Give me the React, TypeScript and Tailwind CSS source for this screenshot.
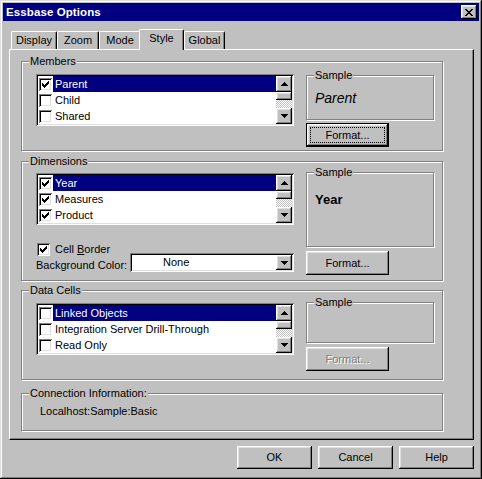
import type { ReactNode } from 'react';

const RAISED =
  'shadow-[inset_-1px_-1px_0_#000,inset_1px_1px_0_#fff,inset_-2px_-2px_0_#808080,inset_2px_2px_0_#dfdfdf]';
const SUNKEN =
  'shadow-[inset_1px_1px_0_#808080,inset_-1px_-1px_0_#fff,inset_2px_2px_0_#000,inset_-2px_-2px_0_#dfdfdf]';

interface ListItem {
  label: string;
  checked: boolean;
}

const MEMBERS: ListItem[] = [
  { label: 'Parent', checked: true },
  { label: 'Child', checked: false },
  { label: 'Shared', checked: false },
];

const DIMENSIONS: ListItem[] = [
  { label: 'Year', checked: true },
  { label: 'Measures', checked: true },
  { label: 'Product', checked: true },
];

const DATA_CELLS: ListItem[] = [
  { label: 'Linked Objects', checked: false },
  { label: 'Integration Server Drill-Through', checked: false },
  { label: 'Read Only', checked: false },
];

const TABS = [
  { label: 'Display', width: 'w-[46px]' },
  { label: 'Zoom', width: 'w-[42px]' },
  { label: 'Mode', width: 'w-[42px]' },
  { label: 'Style', width: 'w-[45px]', selected: true },
  { label: 'Global', width: 'w-[41px]' },
];

function CheckMark() {
  return (
    <svg width="7" height="7" viewBox="0 0 7 7" shapeRendering="crispEdges">
      <path
        d="M0 2h1v3h-1zM1 3h1v3h-1zM2 4h1v3h-1zM3 3h1v3h-1zM4 2h1v3h-1zM5 1h1v3h-1zM6 0h1v3h-1z"
        fill="#000"
      />
    </svg>
  );
}

function CheckBox({ checked }: { checked: boolean }) {
  return (
    <span className={`flex h-[13px] w-[13px] shrink-0 items-center justify-center bg-white ${SUNKEN}`}>
      {checked && <CheckMark />}
    </span>
  );
}

function Arrow({ dir }: { dir: 'up' | 'down' }) {
  return (
    <svg width="7" height="4" viewBox="0 0 7 4" shapeRendering="crispEdges">
      <path
        d={
          dir === 'up'
            ? 'M3 0h1v1h1v1h1v1h1v1h-7v-1h1v-1h1v-1h1z'
            : 'M0 0h7v1h-1v1h-1v1h-1v1h-1v-1h-1v-1h-1v-1h-1z'
        }
        fill="#000"
      />
    </svg>
  );
}

function ArrowButton({ dir, className = 'h-[16px]' }: { dir: 'up' | 'down'; className?: string }) {
  return (
    <div className={`flex w-[16px] shrink-0 items-center justify-center bg-[#c0c0c0] ${className} ${RAISED}`}>
      <Arrow dir={dir} />
    </div>
  );
}

function ScrollBar() {
  return (
    <div className="flex w-[16px] flex-col">
      <ArrowButton dir="up" />
      <div className={`h-[8px] bg-[#c0c0c0] ${RAISED}`} />
      <div className="h-[8px] bg-[image:repeating-conic-gradient(#c0c0c0_0_25%,#fff_0_50%)] bg-[length:2px_2px]" />
      <ArrowButton dir="down" />
    </div>
  );
}

function ListBox({ items }: { items: ListItem[] }) {
  return (
    <div className={`flex h-[52px] w-[258px] shrink-0 bg-white p-[2px] ${SUNKEN}`}>
      <div className="flex flex-1 flex-col">
        {items.map((item, i) => (
          <div key={item.label} className="flex h-[16px] items-center">
            <span className="flex w-[15px] justify-center">
              <CheckBox checked={item.checked} />
            </span>
            <span
              className={`flex h-full flex-1 items-center whitespace-nowrap pl-[2px] ${
                i === 0 ? 'bg-[#000080] text-white' : ''
              }`}
            >
              {item.label}
            </span>
          </div>
        ))}
      </div>
      <ScrollBar />
    </div>
  );
}

function Group({ label, className, children }: { label: string; className: string; children?: ReactNode }) {
  return (
    <div className={`relative border border-[#808080] shadow-[inset_1px_1px_0_#fff,1px_1px_0_#fff] ${className}`}>
      <span className="absolute -top-[8px] left-[7px] bg-[#c0c0c0] px-[1px] leading-[14px]">{label}</span>
      {children}
    </div>
  );
}

function Button({
  children,
  className = '',
  isDefault = false,
  disabled = false,
}: {
  children: ReactNode;
  className?: string;
  isDefault?: boolean;
  disabled?: boolean;
}) {
  if (isDefault) {
    return (
      <div className={`flex border border-black bg-[#c0c0c0] ${className}`}>
        <div className={`flex flex-1 p-[3px] ${RAISED}`}>
          <div className="flex flex-1 items-center justify-center border border-dotted border-black">{children}</div>
        </div>
      </div>
    );
  }
  return (
    <div
      className={`flex items-center justify-center bg-[#c0c0c0] ${RAISED} ${className} ${
        disabled ? 'text-[#808080] [text-shadow:1px_1px_0_#fff]' : ''
      }`}
    >
      {children}
    </div>
  );
}

function TitleBar() {
  return (
    <div className="flex h-[18px] items-center justify-between bg-[#000080] pl-[3px] pr-[2px]">
      <span className="text-[11.5px] font-bold tracking-[0.1px] text-white">Essbase Options</span>
      <div className={`flex h-[14px] w-[16px] items-center justify-center bg-[#c0c0c0] ${RAISED}`}>
        <svg width="8" height="7" viewBox="0 0 8 7" shapeRendering="crispEdges">
          <path
            d="M0 0h2v1h-2zM6 0h2v1h-2zM1 1h2v1h-2zM5 1h2v1h-2zM2 2h4v1h-4zM3 3h2v1h-2zM2 4h4v1h-4zM1 5h2v1h-2zM5 5h2v1h-2zM0 6h2v1h-2zM6 6h2v1h-2z"
            fill="#000"
          />
        </svg>
      </div>
    </div>
  );
}

function Tabs() {
  return (
    <div className="relative z-10 mt-[8px] flex h-[20px] items-end pl-[2px]">
      {TABS.map(tab =>
        tab.selected ? (
          <div
            key={tab.label}
            className={`-mb-[1px] -ml-[2px] flex h-[21px] items-center justify-center rounded-t-[2px] border-l border-r border-t border-l-white border-r-black border-t-white bg-[#c0c0c0] pb-[3px] shadow-[inset_-1px_0_0_#808080] ${tab.width}`}
          >
            {tab.label}
          </div>
        ) : (
          <div
            key={tab.label}
            className={`flex h-[18px] items-center justify-center rounded-t-[2px] border-l border-r border-t border-l-white border-r-black border-t-white shadow-[inset_-1px_0_0_#808080] ${tab.width}`}
          >
            {tab.label}
          </div>
        )
      )}
    </div>
  );
}

export default function App() {
  return (
    <div className="flex h-[479px] w-[482px] flex-col bg-[#c0c0c0] p-[3px] font-['Liberation_Sans',Arial,sans-serif] text-[11px] leading-[13px] text-black shadow-[inset_-1px_-1px_0_#000,inset_1px_1px_0_#dfdfdf,inset_-2px_-2px_0_#808080,inset_2px_2px_0_#fff]">
      <TitleBar />

      <div className="ml-[6px] w-[465px]">
        <Tabs />
        <div className="h-[391px] w-[465px] border border-b-black border-l-white border-r-black border-t-white pl-[11px] pt-[11px] shadow-[inset_-1px_-1px_0_#808080]">
          {/* Members */}
          <Group label="Members" className="flex h-[90px] w-[422px] items-start pl-[14px] pt-[12px]">
            <ListBox items={MEMBERS} />
            <div className="ml-[12px] mt-[1px] flex flex-col">
              <Group label="Sample" className="h-[45px] w-[128px] pl-[8px] pt-[14px]">
                <span className="text-[14px] italic leading-[16px]">Parent</span>
              </Group>
              <Button isDefault className="mt-[3px] h-[24px] w-[83px]">
                Format...
              </Button>
            </div>
          </Group>

          {/* Dimensions */}
          <Group label="Dimensions" className="mt-[10px] flex h-[120px] w-[422px] items-start pl-[14px] pt-[11px]">
            <div className="flex flex-col">
              <ListBox items={DIMENSIONS} />
              <div className="ml-[1px] mt-[18px] flex h-[13px] items-center gap-[5px]">
                <CheckBox checked />
                <span>
                  Cell <span className="underline">B</span>order
                </span>
              </div>
              <div className="-mt-[3px] flex items-start">
                <span className="w-[94px] pt-[6px]">Background Color:</span>
                <div className={`flex h-[19px] w-[164px] bg-white p-[2px] ${SUNKEN}`}>
                  <span className="flex flex-1 items-center pl-[31px]">None</span>
                  <ArrowButton dir="down" className="h-[15px]" />
                </div>
              </div>
            </div>
            <div className="-mt-[1px] ml-[12px] flex flex-col">
              <Group label="Sample" className="h-[75px] w-[128px] pl-[8px] pt-[19px]">
                <span className="text-[13px] font-bold leading-[16px]">Year</span>
              </Group>
              <Button className="mt-[4px] h-[24px] w-[83px]">Format...</Button>
            </div>
          </Group>

          {/* Data Cells */}
          <Group label="Data Cells" className="mt-[9px] flex h-[90px] w-[422px] items-start pl-[14px] pt-[12px]">
            <ListBox items={DATA_CELLS} />
            <div className="-mt-[1px] ml-[12px] flex flex-col">
              <Group label="Sample" className="h-[41px] w-[128px]" />
              <Button disabled className="mt-[4px] h-[24px] w-[83px]">
                Format...
              </Button>
            </div>
          </Group>

          {/* Connection */}
          <Group label="Connection Information:" className="mt-[13px] h-[38px] w-[422px] pl-[18px] pt-[11px]">
            <span>Localhost:Sample:Basic</span>
          </Group>
        </div>

        <div className="mt-[6px] flex justify-end gap-[6px]">
          <Button className="h-[23px] w-[75px]">OK</Button>
          <Button className="h-[23px] w-[75px]">Cancel</Button>
          <Button className="h-[23px] w-[75px]">Help</Button>
        </div>
      </div>
    </div>
  );
}
